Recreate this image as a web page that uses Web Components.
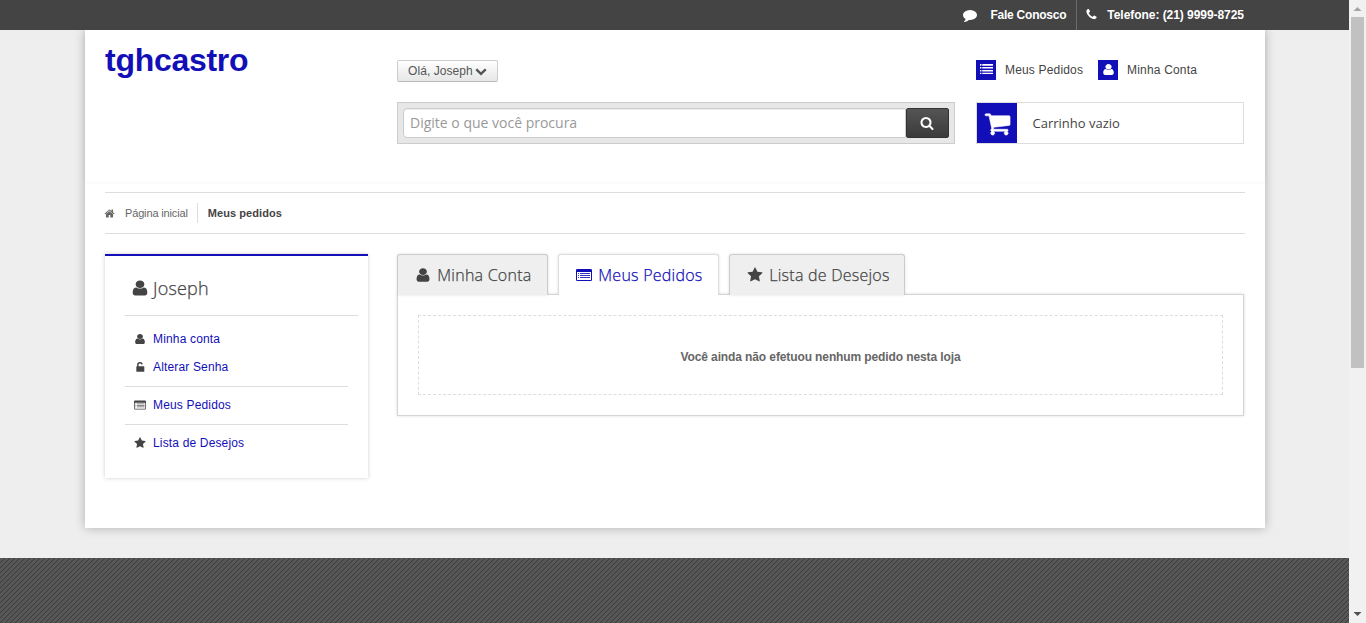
<!DOCTYPE html>
<html lang="pt-BR">
<head>
<meta charset="utf-8">
<title>Meus pedidos - tghcastro</title>
<style>
html,body{margin:0;height:100%;overflow:hidden}
body{font:12px/20px "Liberation Sans",Arial,sans-serif;color:#444;background:#eee}
</style>
</head>
<body>
<store-page></store-page>
<script>
const ICONS={
user:'<path transform="translate(896 896) scale(1.13 .97) translate(-896 -896)" d="M1536 1399q0 109-62.5 187t-150.5 78h-854q-88 0-150.5-78t-62.5-187q0-85 8.5-160.5t31.5-152 58.5-131 94-89 134.5-34.5q131 128 313 128t313-128q76 0 134.5 34.5t94 89 58.5 131 31.5 152 8.5 160.5zm-256-887q0 159-112.5 271.5t-271.5 112.5-271.5-112.5-112.5-271.5 112.5-271.5 271.5-112.5 271.5 112.5 112.5 271.5z"/>',
star:'<path d="M1728 647q0 22-26 48l-363 354 86 500q1 7 1 20 0 21-10.5 35.5t-30.5 14.5q-19 0-40-12l-449-236-449 236q-22 12-40 12-21 0-31.5-14.5t-10.5-35.5q0-6 2-20l86-500-364-354q-25-27-25-48 0-37 56-46l502-73 225-455q19-41 49-41t49 41l225 455 502 73q56 9 56 46z"/>',
search:'<path d="M1216 832q0-185-131.5-316.5t-316.5-131.5-316.5 131.5-131.5 316.5 131.5 316.5 316.5 131.5 316.5-131.5 131.5-316.5zm512 832q0 52-38 90t-90 38q-54 0-90-38l-343-342q-179 124-399 124-143 0-273.5-55.5t-225-150-150-225-55.5-273.5 55.5-273.5 150-225 225-150 273.5-55.5 273.5 55.5 225 150 150 225 55.5 273.5q0 220-124 399l343 343q37 37 37 90z"/>',
phone:'<path d="M1600 1240q0 27-10 70.5t-21 68.5q-21 50-122 106-94 51-186 51-27 0-52.5-3.5t-57.5-12.5-47.5-14.5-55.5-20.5-49-18q-98-35-175-83-128-79-264.5-215.5t-215.5-264.5q-48-77-83-175-3-9-18-49t-20.5-55.5-14.5-47.5-12.5-57.5-3.5-52.5q0-92 51-186 56-101 106-122 25-11 68.5-21t70.5-10q14 0 21 3 18 6 53 76 11 19 30 54t35 63.5 31 53.5q3 4 17.5 25t21.5 35.5 7 28.5q0 20-28.5 50t-62 55-62 53-28.5 46q0 9 5 22.5t8.5 20.5 14 24 11.5 19q76 137 174 235t235 174q2 1 19 11.5t24 14 20.5 8.5 22.5 5q18 0 46-28.5t53-62 55-62 50-28.5q14 0 28.5 7t35.5 21.5 25 17.5q25 15 53.5 31t63.5 35 54 30q70 35 76 53 3 7 3 21z"/>',
comment:'<path d="M1792 896q0 174-120 321.5t-326 233-450 85.5q-70 0-145-8-198 175-460 242-49 14-114 22-17 2-30.5-9t-17.5-29v-1q-3-4-.5-12t2-10 4.5-9.5l6-9 7-8.5 8-9q7-8 31-34.5t34.5-38 31-39.5 32.5-51 27-59 26-76q-157-89-247.5-220t-90.5-281q0-130 71-248.5t191-204.5 286-136.5 348-50.5q244 0 450 85.5t326 233 120 321.5z"/>',
home:'<path d="M1472 992v480q0 26-19 45t-45 19h-384v-384h-256v384h-384q-26 0-45-19t-19-45v-480q0-1 .5-3t.5-3l575-474 575 474q1 2 1 6zm223-69l-62 74q-8 9-21 11h-3q-13 0-21-7l-692-577-692 577q-12 8-24 7-13-2-21-11l-62-74q-8-10-7-23.5t11-21.5l719-599q32-26 76-26t76 26l244 204v-195q0-14 9-23t23-9h192q14 0 23 9t9 23v408l219 182q10 8 11 21.5t-7 23.5z"/>',
cart:'<path d="M704 1536q0 52-38 90t-90 38-90-38-38-90 38-90 90-38 90 38 38 90zm896 0q0 52-38 90t-90 38-90-38-38-90 38-90 90-38 90 38 38 90zm128-1088v512q0 24-16.5 42.5t-40.5 21.5l-1044 122q13 60 13 70 0 16-24 64h920q26 0 45 19t19 45-19 45-45 19h-1024q-26 0-45-19t-19-45q0-11 8-31.5t16-36 21.5-40 15.5-29.5l-177-823h-204q-26 0-45-19t-19-45 19-45 45-19h256q16 0 28.5 6.5t19.5 15.5 13 24.5 8 26 5.5 29.5 4.5 26h1201q26 0 45 19t19 45z" stroke="currentColor" stroke-width="40"/>',
chevron:'<path d="M1683 808l-742 741q-19 19-45 19t-45-19l-742-741q-19-19-19-45.5t19-45.5l166-165q19-19 45-19t45 19l531 531 531-531q19-19 45-19t45 19l166 165q19 19 19 45.5t-19 45.5z"/>',
list:'<path d="M0 138h200v230H0zM310 138h1482v230H310zM0 551h200v200H0zM310 551h1482v200H310zM0 965h200v200H0zM310 965h1482v200H310zM0 1340h200v180H0zM310 1340h1482v180H310z"/>',
listalt:'<path fill-rule="evenodd" d="M150 224H1642Q1792 224 1792 374V1418Q1792 1568 1642 1568H150Q0 1568 0 1418V374Q0 224 150 224ZM112 560V1420Q112 1456 148 1456H1644Q1680 1456 1680 1420V560Z"/><path opacity=".85" d="M224 672h112v100H224zM448 672h1120v100H448zM224 896h112v100H224zM448 896h1120v100H448zM224 1120h112v100H224zM448 1120h1120v100H448z"/>',
unlock:'<path d="M460 780V580Q460 150 870 150Q1280 150 1330 500L1110 540Q1060 360 870 360Q680 360 680 580V780H1460Q1540 780 1540 860V1540Q1540 1620 1460 1620H430Q350 1620 350 1540V860Q350 780 430 780Z"/>'
};
function define(name,css,html){
  customElements.define(name,class extends HTMLElement{
    constructor(){
      super();
      const t=document.createElement('template');
      t.innerHTML='<style>*{box-sizing:border-box}'+css+'</style>'+html;
      this.attachShadow({mode:'open'}).append(t.content.cloneNode(true));
    }
  });
}
customElements.define('fa-icon',class extends HTMLElement{
  connectedCallback(){
    if(this.shadowRoot)return;
    this.attachShadow({mode:'open'}).innerHTML='<style>:host{display:block;flex:none;width:var(--s,12px);height:var(--s,12px)}svg{display:block;width:100%;height:100%;overflow:visible;fill:currentColor}</style><svg viewBox="0 0 1792 1792">'+ICONS[this.getAttribute('name')]+'</svg>';
  }
});
define('top-bar',`:host{display:flex;justify-content:flex-end;height:30px;padding-right:105px;background:#444;color:#fff;font-weight:bold;line-height:30px}
div{display:flex}.a{padding-right:10px;border-right:1px solid #6b6b6b;letter-spacing:-.23px}.b{padding-left:8px;letter-spacing:-.05px}
.a fa-icon{--s:14px;margin:8px 13px 0 0}.b fa-icon{--s:13px;margin:8px 9px 0 0}`,
`<div class="a"><fa-icon name="comment"></fa-icon><span>Fale Conosco</span></div><div class="b"><fa-icon name="phone"></fa-icon><span>Telefone: (21) 9999-8725</span></div>`);
define('greeting-button',`:host{display:flex;width:101px;height:22px;padding-left:10px;border:1px solid #ccc;border-bottom-color:#bbb;border-radius:2px;background:linear-gradient(#fff,#e6e6e6);color:#555;line-height:21px;letter-spacing:.07px}
fa-icon{--s:12px;margin:4px 0 0 2px}`,`<slot></slot><fa-icon name="chevron"></fa-icon>`);
define('search-box',`:host{display:flex;height:42px;margin-top:20px;padding:5px;border:1px solid #ccc;background:#e7e7e7}
.f{flex:1;height:30px;padding-left:6px;border:1px solid #ccc;border-radius:4px 0 0 4px;background:#fff;box-shadow:inset 0 1px 1px #00000013;font:14px/28px "Open Sans",sans-serif;color:#999}
.b{width:43px;height:30px;border:1px solid #333;border-radius:2px;background:linear-gradient(#555,#3a3a3a);color:#fff;padding:7px 0 0 13px}fa-icon{--s:14px}`,
`<div class="f"><slot></slot></div><div class="b"><fa-icon name="search"></fa-icon></div>`);
define('account-link',`:host{display:flex;line-height:20px;letter-spacing:.17px}.i{width:20px;height:20px;margin-right:9px;background:#120fb8;color:#fff;padding:3px 0 0 4px;--s:13px}`,
`<div class="i"><slot name="icon"></slot></div><slot></slot>`);
define('cart-box',`:host{display:flex;height:42px;margin-top:22px;border:1px solid #ddd;font:13px/40px "Open Sans",sans-serif}
.i{width:40px;height:40px;margin-right:15.5px;background:#120fb8;color:#fff;padding:6.5px 0 0 7px}fa-icon{--s:27px}`,
`<div class="i"><fa-icon name="cart"></fa-icon></div><slot></slot>`);
define('store-header',`:host{display:grid;grid-template-columns:292px 558px 268px;column-gap:0;height:152px;padding:0 20px;background:#fff;box-shadow:0 0 4px #0000000d}
h1{margin:9px 0 0;font:bold 32px/42px "Liberation Sans",Arial,sans-serif;letter-spacing:-.28px;color:#120fb8}
.m{padding-top:30px}.r{margin-left:21px;width:268px;padding-top:30px}.l{display:flex;gap:15px}`,
`<h1>tghcastro</h1><div class="m"><greeting-button>Olá, Joseph</greeting-button><search-box>Digite o que você procura</search-box></div>
<div class="r"><div class="l"><account-link><fa-icon slot="icon" name="list"></fa-icon>Meus Pedidos</account-link><account-link><fa-icon slot="icon" name="user"></fa-icon>Minha Conta</account-link></div><cart-box>Carrinho vazio</cart-box></div>`);
define('bread-crumb',`:host{display:flex;height:42px;margin-top:10px;padding-top:10px;border-top:1px solid #ddd;border-bottom:1px solid #ddd;font-size:11px;line-height:20px;color:#666}
fa-icon{--s:11px;margin:5px 10px 0 -1px}span{height:20px;padding-right:9px;border-right:1px solid #ddd;margin-right:10px;letter-spacing:-.15px}b{color:#444;letter-spacing:.08px}`,
`<fa-icon name="home"></fa-icon><span>Página inicial</span><b>Meus pedidos</b>`);
define('side-link',`:host{display:flex;height:28px;padding-left:8px;line-height:28px;letter-spacing:.16px;color:#120fb8}
.i{width:20px;padding:8px 0 0 .5px;color:#444}`,`<div class="i"><slot name="icon"></slot></div><slot></slot>`);
define('side-menu',`:host{display:block;width:263px;height:224px;padding:0 0 0 20px;border-top:2px solid #120fb8;background:#fff;box-shadow:0 0 4px #0003}
h2{display:flex;height:60px;margin:0 10px 9px 0;padding-left:7px;border-bottom:1px solid #ddd;font:300 18px/64px "Open Sans",sans-serif;letter-spacing:.2px;-webkit-text-stroke:.25px;color:#444}
h2 fa-icon{--s:18px;color:#444;margin:23px 4px 0 -1px}.g{width:223px;border-bottom:1px solid #ddd;padding-bottom:5px;margin-bottom:4px}.g:last-child{border:0}`,
`<h2><fa-icon name="user"></fa-icon>Joseph</h2>
<div class="g"><side-link><fa-icon slot="icon" name="user"></fa-icon>Minha conta</side-link><side-link><fa-icon slot="icon" name="unlock"></fa-icon>Alterar Senha</side-link></div>
<div class="g"><side-link><fa-icon slot="icon" name="listalt"></fa-icon>Meus Pedidos</side-link></div>
<div class="g"><side-link><fa-icon slot="icon" name="star"></fa-icon>Lista de Desejos</side-link></div>`);
define('tab-item',`:host{display:flex;width:var(--w);height:41px;padding-left:17px;border:1px solid #ccc;border-bottom:0;border-radius:3px 3px 0 0;background:#efefef;box-shadow:0 0 3px #0002;font:300 16px/41px "Open Sans",sans-serif;letter-spacing:.24px;-webkit-text-stroke:.25px;color:#444}
:host([active]){background:#fff;border-color:#ddd;color:#120fb8;clip-path:inset(-4px -4px 0 -4px);z-index:1}
.i{width:22.3px;padding-top:12px;--s:16px}`,`<div class="i"><slot name="icon"></slot></div><slot></slot>`);
define('orders-panel',`:host{display:block;width:848px}.t{display:flex;gap:10px;height:40px}.t tab-item{position:relative}
.p{height:122px;padding:20px;border:1px solid #d4d4d4;background:#fff;box-shadow:0 0 3px #0002}
.e{height:80px;border:1px dashed #ddd;text-align:center;font-weight:bold;letter-spacing:-.11px;line-height:82px;color:#666}`,
`<div class="t"><tab-item style="--w:151px"><fa-icon slot="icon" name="user"></fa-icon>Minha Conta</tab-item><tab-item active style="--w:161px"><fa-icon slot="icon" name="listalt"></fa-icon>Meus Pedidos</tab-item><tab-item style="--w:176px"><fa-icon slot="icon" name="star"></fa-icon>Lista de Desejos</tab-item></div>
<div class="p"><div class="e">Você ainda não efetuou nenhum pedido nesta loja</div></div>`);
define('scroll-rail',`:host{display:flex;flex-direction:column;align-items:center;width:17px;height:100%;background:#f1f1f1}
svg{display:block;width:17px;height:17px}.t{width:13px;height:351px;background:#c1c1c1}.s{flex:1}`,
`<svg viewBox="0 0 17 17"><path d="M4.5 11h8L8.5 7z" fill="#a3a3a3"/></svg><div class="t"></div><div class="s"></div><svg viewBox="0 0 17 17"><path d="M4.5 6h8L8.5 10z" fill="#505050"/></svg>`);
define('store-page',`:host{display:flex;height:623px}.v{width:1349px;height:623px;overflow:hidden}
.c{width:1180px;height:498px;margin:0 0 30px 85px;background:#fff;box-shadow:0 0 10px #0004;clip-path:inset(0 -12px -14px -12px)}
.b{padding:0 20px}.g{display:flex;gap:29px;margin-top:20px}orders-panel{margin-right:-1px;width:847px}
.f{height:65px;background:url("data:image/svg+xml,%3Csvg xmlns='http://www.w3.org/2000/svg' width='5' height='5' shape-rendering='crispEdges'%3E%3Crect width='5' height='5' fill='%23575757'/%3E%3Cpath d='M4 0h1v1h-1zM3 1h1v1h-1zM2 2h1v1h-1zM1 3h1v1h-1zM0 4h1v1h-1z' fill='%233a3a3a'/%3E%3C/svg%3E")}`,
`<div class="v"><top-bar></top-bar><div class="c"><store-header></store-header><div class="b"><bread-crumb></bread-crumb><div class="g"><side-menu></side-menu><orders-panel></orders-panel></div></div></div><div class="f"></div></div><scroll-rail></scroll-rail>`);
</script>
</body>
</html>
